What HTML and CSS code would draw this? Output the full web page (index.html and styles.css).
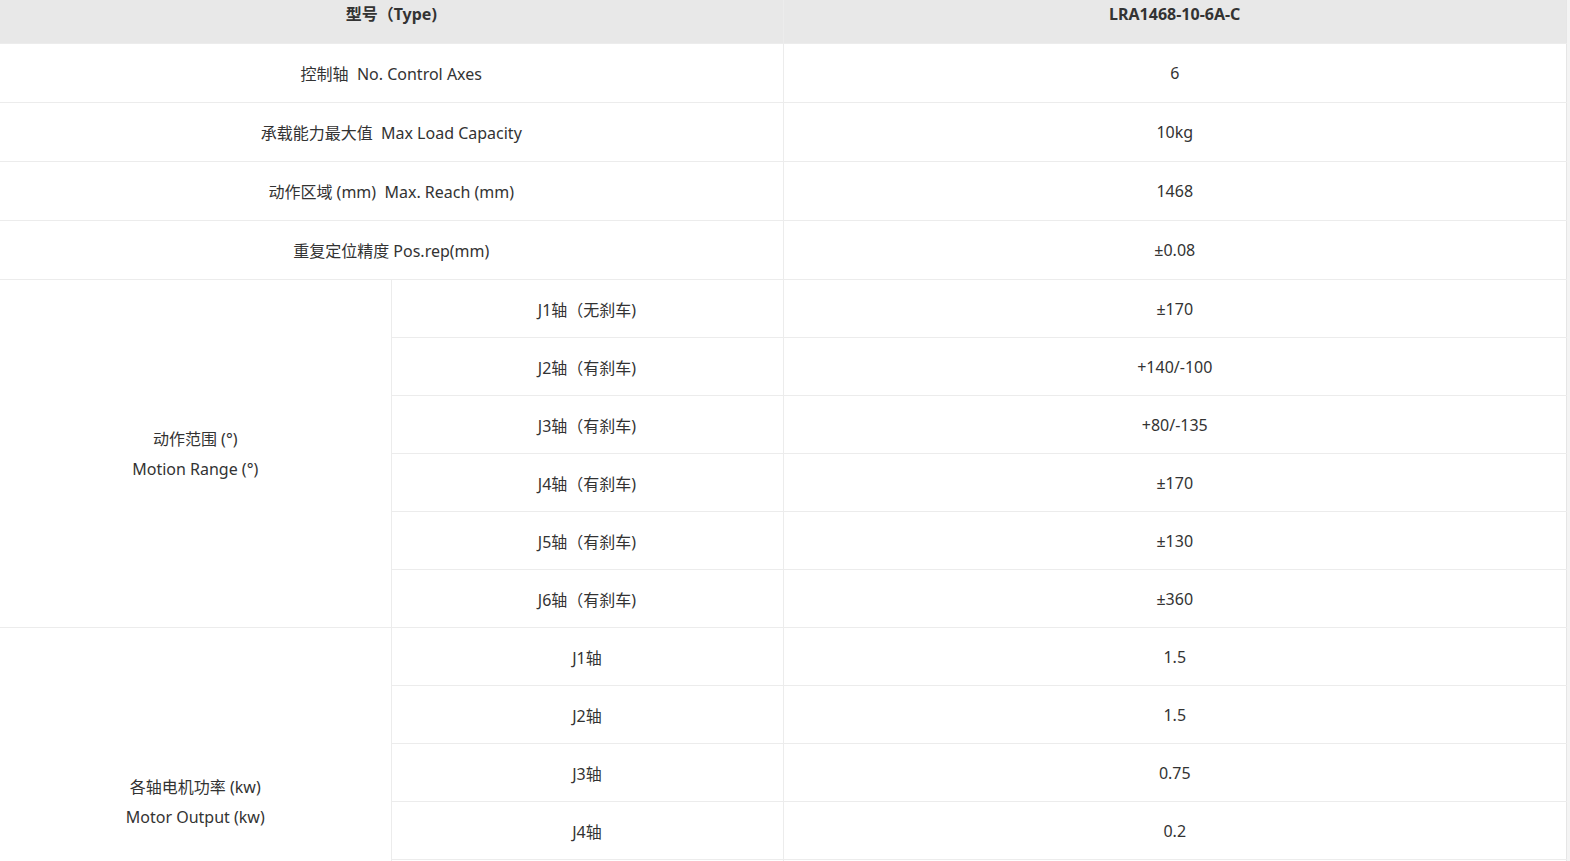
FILE: index.html
```html
<html>
<head>
<meta charset="utf-8">
<link rel="stylesheet" href="styles.css">
</head>
<body>
<table class="spec">
  <colgroup>
    <col class="col_group">
    <col class="col_item">
    <col class="col_value">
  </colgroup>
  <thead>
    <tr>
      <th colspan="2">型号（Type)</th>
      <th class="value">LRA1468-10-6A-C</th>
    </tr>
  </thead>
  <tbody>
    <tr><td colspan="2">控制轴&nbsp;&nbsp;No. Control Axes</td><td class="value">6</td></tr>
    <tr><td colspan="2">承载能力最大值&nbsp;&nbsp;Max Load Capacity</td><td class="value">10kg</td></tr>
    <tr><td colspan="2">动作区域 (mm)&nbsp;&nbsp;Max. Reach (mm)</td><td class="value">1468</td></tr>
    <tr><td colspan="2">重复定位精度 Pos.rep(mm)</td><td class="value">±0.08</td></tr>

    <tr class="sub">
      <td rowspan="6" class="group"><span>动作范围 (°)</span><span>Motion Range (°)</span></td>
      <td class="item">J1轴（无刹车)</td><td class="value">±170</td>
    </tr>
    <tr class="sub"><td class="item">J2轴（有刹车)</td><td class="value">+140/-100</td></tr>
    <tr class="sub"><td class="item">J3轴（有刹车)</td><td class="value">+80/-135</td></tr>
    <tr class="sub"><td class="item">J4轴（有刹车)</td><td class="value">±170</td></tr>
    <tr class="sub"><td class="item">J5轴（有刹车)</td><td class="value">±130</td></tr>
    <tr class="sub"><td class="item">J6轴（有刹车)</td><td class="value">±360</td></tr>

    <tr class="sub">
      <td rowspan="6" class="group"><span>各轴电机功率 (kw)</span><span>Motor Output (kw)</span></td>
      <td class="item">J1轴</td><td class="value">1.5</td>
    </tr>
    <tr class="sub"><td class="item">J2轴</td><td class="value">1.5</td></tr>
    <tr class="sub"><td class="item">J3轴</td><td class="value">0.75</td></tr>
    <tr class="sub"><td class="item">J4轴</td><td class="value">0.2</td></tr>
    <tr class="sub"><td class="item">J5轴</td><td class="value">0.2</td></tr>
    <tr class="sub"><td class="item">J6轴</td><td class="value">0.2</td></tr>
  </tbody>
</table>
</body>
</html>
```

FILE: styles.css
```css
body{
  margin: 0;
  background-color: #f4f4f4;
  font-family: 'Noto Sans', 'Noto Sans CJK SC', sans-serif;
  color: #333;
}

.spec{
  width: 1567px;
  border-collapse: collapse;
  table-layout: fixed;
  background-color: white;
  font-size: 16px;
  border-right: 1px solid #e6e6e6;
}

.col_group{
  width: 391px;
}
.col_item{
  width: 392px;
}

.spec th{
  background-color: #e8e8e8;
  font-weight: bold;
  height: 28px;
  line-height: 28px;
  padding: 0 0 15px;
  text-align: center;
  border-bottom: 1px solid #ececec;
}

.spec td{
  height: 59px;
  padding: 0;
  text-align: center;
  vertical-align: middle;
  border-bottom: 1px solid #ececec;
}

.spec .value,
.spec .item{
  border-left: 1px solid #ececec;
}

.spec .sub td{
  height: 58px;
}

.spec td.group span{
  display: block;
  line-height: 30px;
}
```
